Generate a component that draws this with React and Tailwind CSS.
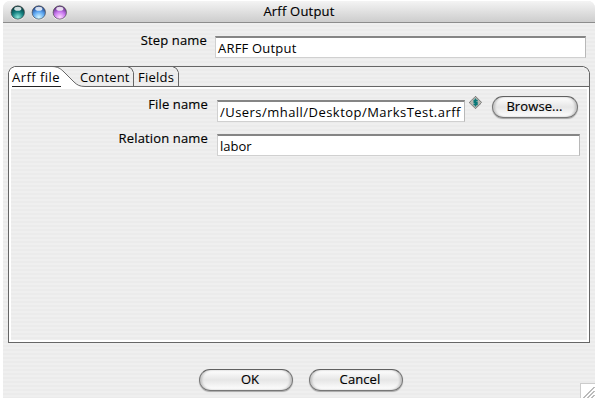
import React from "react";

const STRIPES = "bg-[repeating-linear-gradient(to_bottom,#ebebeb_0px,#ebebeb_2px,#efefef_2px,#efefef_4px)]";
const LABEL = "text-right leading-[9px] tracking-[0.15px] [-webkit-text-stroke:0.15px_#000]";

function Orb({ id, dark, mid, light }) {
  return (
    <svg width="15" height="15" viewBox="0 0 15 15">
      <defs>
        <radialGradient id={id} cx="0.5" cy="0.85" r="0.75">
          <stop offset="0" stopColor={light} />
          <stop offset="0.55" stopColor={mid} />
          <stop offset="1" stopColor={dark} />
        </radialGradient>
      </defs>
      <circle cx="7.8" cy="8.2" r="7" fill="#fafafa" />
      <circle cx="7.8" cy="7.5" r="6.7" fill={`url(#${id})`} stroke="#444" strokeOpacity="0.75" strokeWidth="0.9" />
      <ellipse cx="7.8" cy="3.8" rx="3.6" ry="2" fill="#fff" fillOpacity="0.8" />
    </svg>
  );
}

function Field({ className, children }) {
  return (
    <div className={`h-[22px] border border-t-2 border-[#d0d0d0] border-t-[#858585] border-r-[#b8b8b8] bg-white pl-[2px] text-[13px] leading-[20px] whitespace-nowrap text-black ${className}`}>
      {children}
    </div>
  );
}

function Button({ className, children }) {
  return (
    <button className={`flex h-[22px] shrink-0 items-center justify-center rounded-full border border-[#777] border-t-[#606060] bg-linear-to-b from-white via-[#e6e6e6] via-50% to-white pb-px text-[13px] leading-none text-black shadow-[0_1px_1px_rgba(0,0,0,0.3),inset_2px_0_2px_rgba(0,0,0,0.16),inset_-2px_0_2px_rgba(0,0,0,0.16)] [-webkit-text-stroke:0.15px_#000] ${className}`}>
      {children}
    </button>
  );
}

function TabStrip() {
  return (
    <div className="relative h-[21px]">
      <svg className="absolute inset-0" width="582" height="21" viewBox="0 0 582 21" fill="none">
        <path d="M1 21V6Q1 1 6 1H44C50 1 53 3 56 6L66 16C69 19 72 20.5 77 20.5V21Z" fill="#fff" />
        <path d="M.5 21V6.5L2.5 2.5L6.5 .5H575.5L579.5 2.5L581.5 6.5V21" stroke="#666" />
        <path d="M44 .5C50 .5 53 3 56 6L66 16C69 19 72 20.5 77 20.5H582" stroke="#666" />
        <path d="M119.5 .5L123.5 2.5L125.5 6.5V20M164.5 .5L168.5 2.5L170.5 6.5V20" stroke="#666" />
        <path d="M4 20.5H53" stroke="#222" />
      </svg>
      <div className="relative flex pl-[4px] text-[13px] leading-[22px] whitespace-nowrap text-black">
        <span className="w-[68px] tracking-[0.45px]">Arff file</span>
        <span className="w-[58px] tracking-[0.15px]">Content</span>
        <span className="tracking-[0.25px]">Fields</span>
      </div>
    </div>
  );
}

function VariableIcon() {
  return (
    <svg className="block shrink-0" width="13" height="13" viewBox="0 0 13 13">
      <path d="M6.5 .3L12.7 6.5L6.5 12.7L.3 6.5Z" fill="#b9b9b3" stroke="#555" strokeDasharray="1 .4" />
      <path d="M8.7 4.5H5.2V6.5H8V8.5H4.5M6.5 2.5V10.5" fill="none" stroke="#087878" strokeWidth="1.4" />
    </svg>
  );
}

export default function App() {
  return (
    <div className="h-[401px] w-[597px] overflow-hidden bg-white pt-px pl-[3px] font-['Open_Sans','Noto_Sans',sans-serif] text-[13px] text-black">
      <div className={`flex h-[397px] w-[592px] flex-col overflow-hidden rounded-t-[7px] ${STRIPES}`}>
        <header className="grid h-[22px] shrink-0 grid-cols-[70px_1fr_70px] items-center border-b border-[#8c8c8c] bg-linear-to-b from-[#f4f4f4] to-[#cdcdcd]">
          <div className="flex gap-[6px] pt-px pl-[7px]">
            <Orb id="teal" dark="#053f42" mid="#148080" light="#8ee8dc" />
            <Orb id="blue" dark="#244c96" mid="#5ea8f2" light="#d4f6ff" />
            <Orb id="violet" dark="#69328d" mid="#c878ef" light="#ffdcff" />
          </div>
          <h1 className="text-center tracking-[0.2px] [-webkit-text-stroke:0.15px_#000]">Arff Output</h1>
        </header>
        <div className="flex h-[43px] shrink-0 pt-[13px]">
          <label className={`w-[212px] pr-[8px] ${LABEL}`}>Step name</label>
          <Field className="w-[371px]"><span className="tracking-[0.2px]">ARFF Output</span></Field>
        </div>
        <main className="ml-[5px] flex h-[277px] w-[582px] shrink-0 flex-col">
          <TabStrip />
          <section className="flex-1 border border-t-0 border-[#666]">
            <div className="h-full border-2 border-white pt-[11px]">
              <div className="flex h-[34px]">
                <label className={`w-[206px] pr-[9px] ${LABEL}`}>File name</label>
                <Field className="w-[248px]"><span className="tracking-[0.46px]">/Users/mhall/Desktop/MarksTest.arff</span></Field>
                <div className="-mt-[4px] ml-[4px] shrink-0"><VariableIcon /></div>
                <Button className="-mt-[4px] ml-[10px] w-[86px] pr-px tracking-[0.1px]">Browse...</Button>
              </div>
              <div className="flex">
                <label className={`w-[206px] pr-[9px] ${LABEL}`}>Relation name</label>
                <Field className="w-[363px]"><span>labor</span></Field>
              </div>
            </div>
          </section>
        </main>
        <footer className="flex flex-1">
          <div className="flex flex-1 gap-[16px] pt-[26px] pl-[196px]">
            <Button className="w-[94px] pl-[8px]">OK</Button>
            <Button className="w-[94px] pl-[8px] tracking-[0.1px]">Cancel</Button>
          </div>
          <svg className="self-end" width="15" height="15" viewBox="0 0 15 15" fill="none">
            <path d="M0 0H15V15H0Z" fill="#fff" />
            <path d="M0 .5H15M.5 0V15" stroke="#ccc" />
            <path d="M3.5 15L14.5 4M7.5 15L14.5 8M11.5 15L14.5 12" stroke="#777" />
          </svg>
        </footer>
      </div>
    </div>
  );
}
